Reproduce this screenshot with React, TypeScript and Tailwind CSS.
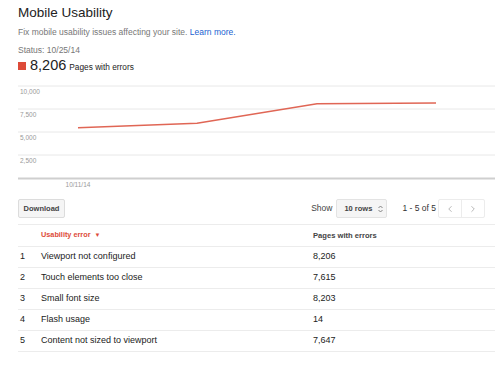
import { ChevronLeft, ChevronRight } from 'lucide-react';

const rows = [
  { n: 1, error: 'Viewport not configured', pages: '8,206' },
  { n: 2, error: 'Touch elements too close', pages: '7,615' },
  { n: 3, error: 'Small font size', pages: '8,203' },
  { n: 4, error: 'Flash usage', pages: '14' },
  { n: 5, error: 'Content not sized to viewport', pages: '7,647' },
];

const Chart = () => {
  const grid = [
    { y: 11, label: '10,000' },
    { y: 34, label: '7,500' },
    { y: 57, label: '5,000' },
    { y: 80, label: '2,500' },
  ];
  return (
    <svg width="477" height="117" className="block">
      {grid.map((g) => (
        <g key={g.label}>
          <line x1="0" x2="477" y1={g.y} y2={g.y} stroke="#e8e8e8" strokeWidth="1" />
          <text x="2" y={g.y + 7.5} fontSize="6.5" fill="#999" fontFamily="Liberation Sans, Arial, sans-serif">
            {g.label}
          </text>
        </g>
      ))}
      <line x1="0" x2="477" y1="103.5" y2="103.5" stroke="#cfcfcf" strokeWidth="2" />
      <text x="60" y="112" fontSize="6.5" fill="#999" textAnchor="middle" fontFamily="Liberation Sans, Arial, sans-serif">
        10/11/14
      </text>
      <polyline
        points="60,52.7 179,48.3 299,28.7 418,28"
        fill="none"
        stroke="#e06655"
        strokeWidth="1.6"
      />
    </svg>
  );
};

export default function App() {
  return (
    <div className="w-[498px] h-[365px] bg-white pl-[18px] pr-[3px] text-[#222] font-['Liberation_Sans',Arial,sans-serif] overflow-hidden">
      {/* Header */}
      <h1 className="text-[13.5px] leading-[26px] text-[#222]">Mobile Usability</h1>
      <p className="text-[8.5px] leading-[12px] text-[#777]">
        Fix mobile usability issues affecting your site. <span className="text-[#1a5fd0]">Learn more.</span>
      </p>
      <p className="mt-[6px] text-[8.5px] leading-[12px] text-[#777]">Status: 10/25/14</p>
      <div className="flex items-baseline h-[19px] leading-[19px]">
        <span className="inline-block w-[8px] h-[8px] bg-[#dd4b39] mr-[4px]" />
        <span className="text-[14.5px] text-[#222]">8,206</span>
        <span className="ml-[3px] text-[8.3px] text-[#222]">Pages with errors</span>
      </div>

      {/* Chart */}
      <Chart />

      {/* Toolbar */}
      <div className="mt-[7px] flex items-center justify-between pr-[10px] h-[19px]">
        <button className="h-[19px] w-[47px] rounded-[2px] border border-[#dcdcdc] bg-[#f5f5f5] text-[7.5px] font-bold text-[#444]">
          Download
        </button>
        <div className="flex items-center h-[19px]">
          <span className="text-[8.5px] text-[#444] mr-[4px]">Show</span>
          <div className="h-[19px] w-[51px] rounded-[2px] border border-[#e3e3e3] bg-[#f5f5f5] flex items-center pl-[7px]">
            <span className="text-[7.5px] font-bold text-[#444]">10 rows</span>
            <svg width="5" height="8" viewBox="0 0 5 8" className="ml-[6px]">
              <path d="M0.5 3 L2.5 1 L4.5 3 M0.5 5 L2.5 7 L4.5 5" fill="none" stroke="#777" strokeWidth="0.9" />
            </svg>
          </div>
          <span className="ml-[15px] text-[8.5px] text-[#333]">1 - 5 of 5</span>
          <div className="ml-[2px] flex h-[19px] w-[47px] rounded-[2px] border border-[#ececec]">
            <div className="flex-1 flex items-center justify-center border-r border-[#ececec]">
              <ChevronLeft size={10} color="#aaa" strokeWidth={2} />
            </div>
            <div className="flex-1 flex items-center justify-center">
              <ChevronRight size={10} color="#aaa" strokeWidth={2} />
            </div>
          </div>
        </div>
      </div>

      {/* Table */}
      <div className="mt-[6px] border-t border-[#ececec]">
        <div className="flex items-center h-[22px] border-b border-[#ececec]">
          <div className="w-[23px]" />
          <div className="w-[272px] flex items-center text-[7.3px] font-bold text-[#dd4b39]">
            Usability error
            <span className="ml-[4px] text-[6px]">▼</span>
          </div>
          <div className="text-[7.6px] font-bold text-[#444]">Pages with errors</div>
        </div>
        {rows.map((r) => (
          <div key={r.n} className="flex items-center h-[21px] border-b border-[#ececec] text-[9px] text-[#222]">
            <div className="w-[23px] pl-[2px]">{r.n}</div>
            <div className="w-[272px]">{r.error}</div>
            <div>{r.pages}</div>
          </div>
        ))}
      </div>
    </div>
  );
}
